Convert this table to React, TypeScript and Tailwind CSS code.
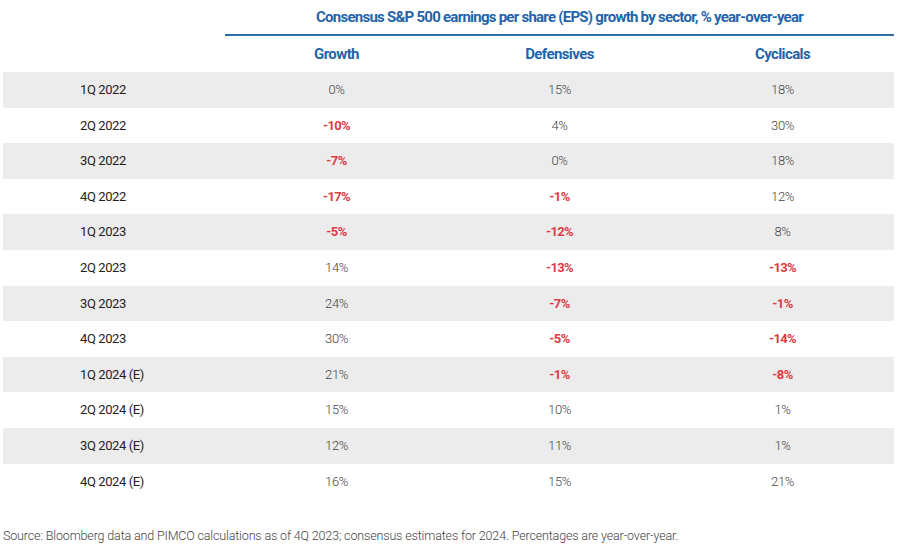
import React from "react";

const rows: [string, string, string, string][] = [
  ["1Q 2022", "0%", "15%", "18%"],
  ["2Q 2022", "-10%", "4%", "30%"],
  ["3Q 2022", "-7%", "0%", "18%"],
  ["4Q 2022", "-17%", "-1%", "12%"],
  ["1Q 2023", "-5%", "-12%", "8%"],
  ["2Q 2023", "14%", "-13%", "-13%"],
  ["3Q 2023", "24%", "-7%", "-1%"],
  ["4Q 2023", "30%", "-5%", "-14%"],
  ["1Q 2024 (E)", "21%", "-1%", "-8%"],
  ["2Q 2024 (E)", "15%", "10%", "1%"],
  ["3Q 2024 (E)", "12%", "11%", "1%"],
  ["4Q 2024 (E)", "16%", "15%", "21%"],
];

function Val({ v }: { v: string }) {
  const neg = v.startsWith("-");
  return (
    <div
      className={
        neg
          ? "w-[223px] text-center font-bold text-[#e03a45] tracking-[-0.6px]"
          : "w-[223px] text-center font-light text-[#444444] tracking-[-0.4px]"
      }
    >
      {v}
    </div>
  );
}

export default function App() {
  return (
    <div
      className="w-[898px] h-[546px] bg-white relative overflow-hidden"
      style={{ fontFamily: "Roboto, 'Open Sans', sans-serif" }}
    >
      <div className="pl-[225px] pr-[4px]">
        <div className="h-[36px] border-b-2 border-[#2f6da5] flex items-center justify-center">
          <span className="text-[15px] font-bold text-[#1f64ab] tracking-[-0.75px]">
            Consensus S&amp;P 500 earnings per share (EPS) growth by sector, % year-over-year
          </span>
        </div>
        <div className="h-[36px] flex items-center text-[15px] font-bold text-[#1f64ab] tracking-[-0.6px]">
          <div className="w-[223px] text-center">Growth</div>
          <div className="w-[223px] text-center">Defensives</div>
          <div className="w-[223px] text-center">Cyclicals</div>
        </div>
      </div>
      <div className="ml-[3px] mr-[4px] flex flex-col">
        {rows.map((r, i) => (
          <div
            key={r[0]}
            className={
              "h-[35.6px] flex items-center text-[13px] " +
              (i % 2 === 0 ? "bg-[#ececec]" : "bg-white")
            }
          >
            <div className="w-[222px] pl-[77px] text-[#222222] tracking-[-0.4px]">{r[0]}</div>
            <Val v={r[1]} />
            <Val v={r[2]} />
            <Val v={r[3]} />
          </div>
        ))}
      </div>
      <div className="absolute left-[3px] top-[527px] text-[12.5px] text-[#444444] tracking-[-0.15px] font-light">
        Source: Bloomberg data and PIMCO calculations as of 4Q 2023; consensus estimates for 2024. Percentages are year-over-year.
      </div>
    </div>
  );
}
